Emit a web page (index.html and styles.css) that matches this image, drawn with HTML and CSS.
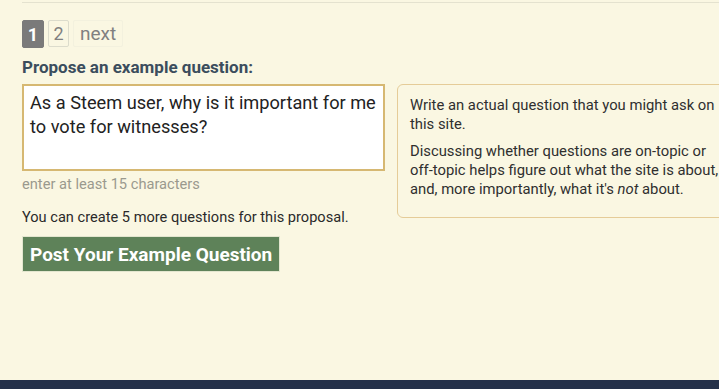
FILE: index.html
```html
<!DOCTYPE html>
<html>
<head>
<meta charset="utf-8">
<link rel="stylesheet" href="styles.css">
</head>
<body>
<div class="page">
  <div class="rule"></div>
  <div class="pager">
    <span class="pg current">1</span>
    <span class="pg">2</span>
    <span class="pg next">next</span>
  </div>
  <h2 class="title">Propose an example question:</h2>
  <div class="row">
    <div class="left">
      <div class="textarea">As a Steem user, why is it important for me to vote for witnesses?</div>
      <div class="hint">enter at least 15 characters</div>
    </div>
    <div class="tip">
      <p>Write an actual question that you might ask on this site.</p>
      <p>Discussing whether questions are on-topic or off-topic helps figure out what the site is about, and, more importantly, what it's <em>not</em> about.</p>
    </div>
  </div>
  <p class="remaining">You can create 5 more questions for this proposal.</p>
  <button class="post">Post Your Example Question</button>
</div>
<div class="footer"></div>
</body>
</html>
```
FILE: styles.css
```css
html, body {
  margin: 0;
  padding: 0;
  background: #faf7e2;
  font-family: Roboto, "Liberation Sans", sans-serif;
  overflow: hidden;
  height: 389px;
}
.page {
  padding-left: 22px;
  height: 380px;
  box-sizing: border-box;
  padding-top: 2px;
  overflow: hidden;
}
.rule {
  height: 1px;
  background: #e4e2cf;
}
.pager {
  display: flex;
  gap: 4px;
  margin-top: 17px;
  height: 28px;
}
.pg {
  display: flex;
  align-items: center;
  justify-content: center;
  min-width: 21px;
  box-sizing: border-box;
  height: 27px;
  border: 1px solid #dcdccc;
  border-radius: 2px;
  color: #808080;
  font-size: 18px;
}
.pg.current {
  width: 22px;
  height: 28px;
  background: #7a7a7a;
  border-color: #7a7a7a;
  color: #fff;
  font-weight: bold;
}
.pg.next {
  border-color: #f3f1de;
  padding: 0 6px;
  font-size: 19px;
}
.title {
  margin: 9px 0 0;
  font-size: 17px;
  font-weight: bold;
  color: #3b4d5d;
  line-height: 20px;
}
.row {
  display: flex;
  gap: 12px;
  margin-top: 7px;
  align-items: flex-start;
}
.left {
  width: 363px;
  flex: none;
}
.textarea {
  box-sizing: border-box;
  height: 87px;
  border: 2px solid #d6b872;
  background: #fff;
  padding: 5px 6px;
  font-size: 18.2px;
  line-height: 24px;
  color: #222;
}
.hint {
  margin-top: 4px;
  font-size: 14.65px;
  color: #9a9a8e;
  line-height: 18px;
}
.tip {
  flex: none;
  width: 340px;
  box-sizing: border-box;
  border: 1px solid #e5cc98;
  border-radius: 6px;
  padding: 11px 12px 10px;
  font-size: 14.8px;
  line-height: 19px;
  color: #2f2f2f;
  height: 134px;
}
.tip p {
  margin: 0 0 8px;
}
.remaining {
  margin: -10px 0 0;
  font-size: 14.6px;
  line-height: 18px;
  color: #2a2a2a;
}
.post {
  display: block;
  margin-top: 10px;
  height: 36px;
  padding: 0 7px;
  background: #5e8259;
  border: 1px solid #e3e6cf;
  color: #fff;
  font-family: Roboto, "Liberation Sans", sans-serif;
  font-weight: bold;
  font-size: 19px;
  cursor: pointer;
}
.footer {
  height: 9px;
  background: #243049;
}
```
